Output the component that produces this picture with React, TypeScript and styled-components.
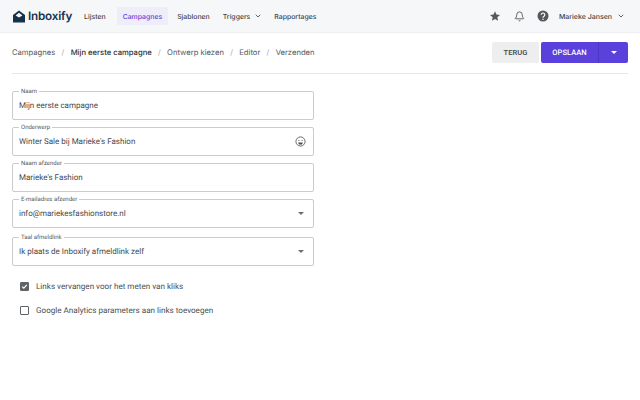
import React from "react";
import styled, { createGlobalStyle } from "styled-components";
import { ChevronDown, Bell } from "lucide-react";

const GlobalStyle = createGlobalStyle`
  html, body {
    margin: 0;
    padding: 0;
    background: #fff;
    font-family: Inter, "Liberation Sans", sans-serif;
    text-rendering: geometricPrecision;
    -webkit-font-smoothing: antialiased;
  }
`;

const Page = styled.div`
  width: 640px;
  height: 400px;
  overflow: hidden;
  background: #fff;
`;

const TopBar = styled.header`
  height: 32px;
  background: #f6f7f9;
  border-bottom: 1px solid #eceef0;
  display: flex;
  align-items: center;
  gap: 1px;
  padding: 0 15px 0 13px;
`;

const Logo = styled.div`
  display: flex;
  align-items: center;
  gap: 3px;
  margin-right: 5px;
`;

const LogoText = styled.span`
  font-family: Inter, sans-serif;
  font-size: 11.7px;
  font-weight: 600;
  letter-spacing: -0.2px;
  color: #16324a;
`;

const NavItem = styled.div<{ $active?: boolean }>`
  height: 18px;
  padding: 0 6px;
  margin: ${({ $active }) => ($active ? "0 2px 0 4px" : "0")};
  border-radius: 2px;
  display: flex;
  align-items: center;
  gap: 4px;
  font-size: 6.9px;
  font-weight: 500;
  color: ${({ $active }) => ($active ? "#5b47d6" : "#3f4448")};
  background: ${({ $active }) => ($active ? "#eeedf9" : "transparent")};
  svg {
    margin-right: -1px;
  }
`;

const Spacer = styled.div`
  flex: 1;
`;

const Actions = styled.div`
  display: flex;
  align-items: center;
  gap: 12.5px;
`;

const UserName = styled.div`
  display: flex;
  align-items: center;
  gap: 5px;
  margin-left: -3px;
  font-size: 7px;
  font-weight: 500;
  color: #3f4448;
`;

const Content = styled.main`
  padding: 0 12px;
`;

const CrumbBar = styled.div`
  padding: 9px 0 10px;
  display: flex;
  align-items: center;
  justify-content: space-between;
  border-bottom: 1px solid #e8e8e8;
`;

const Crumbs = styled.div`
  display: flex;
  align-items: center;
  gap: 6.3px;
  margin-bottom: 1px;
  font-size: 7.65px;
  color: #53585c;
`;

const Crumb = styled.span<{ $current?: boolean }>`
  font-weight: ${({ $current }) => ($current ? 500 : 400)};
  color: ${({ $current }) => ($current ? "#2c3033" : "#53585c")};
`;

const Slash = styled.span`
  color: #a5a8ab;
  font-size: 7.6px;
`;

const Buttons = styled.div`
  display: flex;
  gap: 2px;
`;

const BackButton = styled.button`
  width: 47px;
  height: 21px;
  border: 0;
  border-radius: 2px;
  background: #eeeeee;
  color: #44484b;
  font-family: Roboto, sans-serif;
  font-size: 7.6px;
  font-weight: 500;
  padding: 0;
`;

const SaveGroup = styled.div`
  width: 87px;
  height: 21px;
  border-radius: 2px;
  background: #5a41dc;
  display: flex;
  color: #fff;
  font-family: Roboto, sans-serif;
  font-size: 7.6px;
  font-weight: 500;
`;

const SaveLabel = styled.div`
  width: 57px;
  display: flex;
  align-items: center;
  justify-content: center;
  border-right: 1px solid #4c36bd;
`;

const SaveCaret = styled.div`
  flex: 1;
  display: flex;
  align-items: center;
  justify-content: center;
`;

const Caret = styled.span<{ $color?: string }>`
  width: 0;
  height: 0;
  border-left: 3px solid transparent;
  border-right: 3px solid transparent;
  border-top: 3px solid ${({ $color }) => $color || "#6b6f72"};
`;

const Form = styled.form`
  width: 302px;
  margin-top: 17px;
  display: flex;
  flex-direction: column;
`;

const Field = styled.div<{ $gap?: number }>`
  position: relative;
  margin: 0 0 ${({ $gap }) => $gap ?? 7}px;
  padding: 0 7px 0 6px;
  height: 29px;
  box-sizing: border-box;
  border: 1px solid #c9cbcd;
  border-radius: 2px;
  display: flex;
  align-items: center;
  justify-content: space-between;
`;

const Legend = styled.span`
  position: absolute;
  top: -4px;
  left: 6px;
  padding: 0 2px;
  background: #fff;
  font-family: Roboto, sans-serif;
  font-size: 6px;
  line-height: 7px;
  color: #53585c;
`;

const Value = styled.span`
  font-family: Roboto, sans-serif;
  font-size: 8px;
  color: #45494c;
`;

const FieldIcon = styled.span<{ $inset?: number }>`
  display: flex;
  margin-right: ${({ $inset }) => $inset ?? 2}px;
`;

const Checks = styled.div`
  margin-top: 1px;
`;

const CheckRow = styled.label`
  display: flex;
  align-items: center;
  gap: 7px;
  height: 24px;
  padding-left: 8px;
  font-family: Roboto, sans-serif;
  font-size: 8.1px;
  color: #4a4e51;
`;

const Box = styled.span<{ $checked?: boolean }>`
  width: 7px;
  height: 7px;
  border-radius: 1px;
  border: 1px solid #5f6366;
  background: ${({ $checked }) => ($checked ? "#5f6366" : "transparent")};
  display: flex;
  align-items: center;
  justify-content: center;
`;

const InboxLogo = () => (
  <svg width="12" height="13" viewBox="0 0 12 13">
    <path d="M6 0.5 L12 5 V12.5 H0 V5 Z" fill="#16324a" />
    <path d="M2.6 5.4 L6 2.8 L9.4 5.4 L6 7.6 Z" fill="#f6f7f9" />
  </svg>
);

const StarIcon = () => (
  <svg width="12" height="12" viewBox="0 0 24 24" fill="#55595c">
    <path d="M12 2.5l2.9 6.6 7.1.7-5.4 4.7 1.6 7-6.2-3.7-6.2 3.7 1.6-7L2 9.8l7.1-.7z" />
  </svg>
);

const HelpIcon = () => (
  <svg width="12" height="12" viewBox="0 0 24 24">
    <circle cx="12" cy="12" r="11" fill="#55595c" />
    <path d="M8.5 9.5a3.5 3.5 0 1 1 5.4 3c-1.3.8-1.9 1.4-1.9 2.8" fill="none" stroke="#f6f7f9" strokeWidth="2.4" />
    <circle cx="12" cy="18.6" r="1.5" fill="#f6f7f9" />
  </svg>
);

const SmileIcon = () => (
  <svg width="11" height="11" viewBox="0 0 24 24" fill="none" stroke="#4a4e51" strokeWidth="1.8">
    <circle cx="12" cy="12" r="10" />
    <circle cx="8.5" cy="9.5" r="1.3" fill="#4a4e51" stroke="none" />
    <circle cx="15.5" cy="9.5" r="1.3" fill="#4a4e51" stroke="none" />
    <path d="M7 14h10a5 5 0 0 1-10 0z" fill="#4a4e51" stroke="none" />
  </svg>
);

const crumbs = ["Campagnes", "Mijn eerste campagne", "Ontwerp kiezen", "Editor", "Verzenden"];

export default function App() {
  return (
    <Page>
      <GlobalStyle />
      <TopBar>
        <Logo>
          <InboxLogo />
          <LogoText>Inboxify</LogoText>
        </Logo>
        <NavItem>Lijsten</NavItem>
        <NavItem $active>Campagnes</NavItem>
        <NavItem>Sjablonen</NavItem>
        <NavItem>
          Triggers
          <ChevronDown size={8} strokeWidth={2.5} color="#3f4448" />
        </NavItem>
        <NavItem>Rapportages</NavItem>
        <Spacer />
        <Actions>
          <StarIcon />
          <Bell size={11} color="#55595c" />
          <HelpIcon />
          <UserName>
            Marieke Jansen
            <ChevronDown size={8} strokeWidth={2.5} color="#3f4448" />
          </UserName>
        </Actions>
      </TopBar>
      <Content>
        <CrumbBar>
          <Crumbs>
            {crumbs.map((c, i) => (
              <React.Fragment key={c}>
                {i > 0 && <Slash>/</Slash>}
                <Crumb $current={i === 1}>{c}</Crumb>
              </React.Fragment>
            ))}
          </Crumbs>
          <Buttons>
            <BackButton>TERUG</BackButton>
            <SaveGroup>
              <SaveLabel>OPSLAAN</SaveLabel>
              <SaveCaret>
                <Caret $color="#fff" />
              </SaveCaret>
            </SaveGroup>
          </Buttons>
        </CrumbBar>
        <Form>
          <Field>
            <Legend>Naam</Legend>
            <Value>Mijn eerste campagne</Value>
          </Field>
          <Field>
            <Legend>Onderwerp</Legend>
            <Value>Winter Sale bij Marieke's Fashion</Value>
            <FieldIcon $inset={0}>
              <SmileIcon />
            </FieldIcon>
          </Field>
          <Field>
            <Legend>Naam afzender</Legend>
            <Value>Marieke's Fashion</Value>
          </Field>
          <Field $gap={9}>
            <Legend>E-mailadres afzender</Legend>
            <Value>info@mariekesfashionstore.nl</Value>
            <FieldIcon>
              <Caret />
            </FieldIcon>
          </Field>
          <Field>
            <Legend>Taal afmeldlink</Legend>
            <Value>Ik plaats de Inboxify afmeldlink zelf</Value>
            <FieldIcon>
              <Caret />
            </FieldIcon>
          </Field>
          <Checks>
            <CheckRow>
              <Box $checked>
                <svg width="7" height="7" viewBox="0 0 24 24" fill="none" stroke="#fff" strokeWidth="4">
                  <path d="M4 12.5l5.5 5.5L20 6.5" />
                </svg>
              </Box>
              Links vervangen voor het meten van kliks
            </CheckRow>
            <CheckRow>
              <Box />
              Google Analytics parameters aan links toevoegen
            </CheckRow>
          </Checks>
        </Form>
      </Content>
    </Page>
  );
}
